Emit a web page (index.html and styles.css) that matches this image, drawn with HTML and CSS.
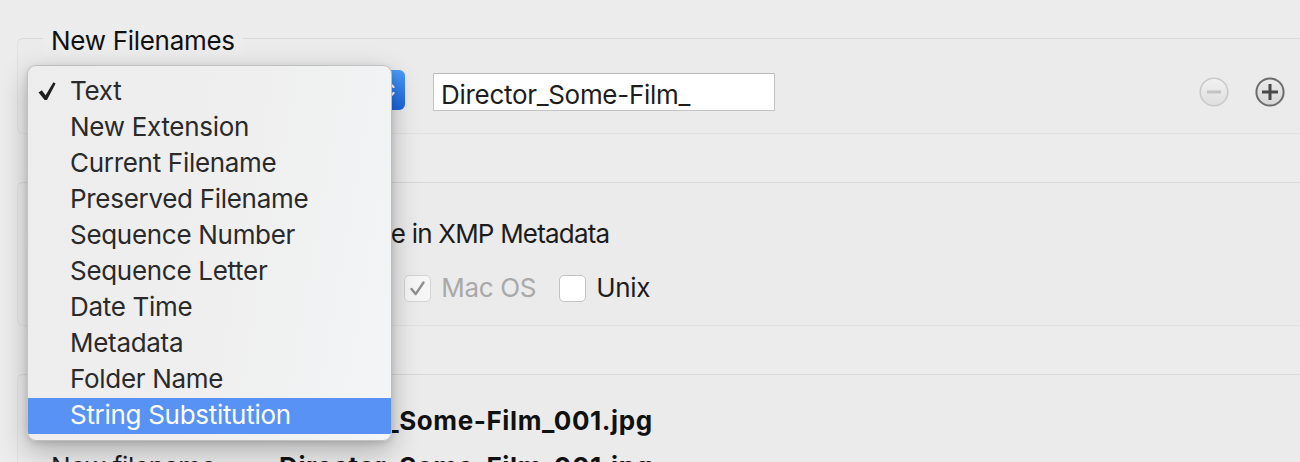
FILE: index.html
```html
<!DOCTYPE html>
<html lang="en">
<head>
<meta charset="utf-8">
<title>Batch Rename</title>
<link rel="stylesheet" href="styles.css">
</head>
<body>
<div class="dialog">
  <section class="group g1">
    <div class="group-title">New Filenames</div>
    <div class="rename-row">
      <div class="popup">
        <span class="popup-label">Text</span>
        <span class="popup-cap">
          <svg viewBox="0 0 32 40" width="32" height="40"><path d="M11.5 17 L16 12.5 L20.5 17 M11.5 23 L16 27.5 L20.5 23" fill="none" stroke="#fff" stroke-width="2.4" stroke-linecap="round" stroke-linejoin="round"/></svg>
        </span>
      </div>
      <div class="textfield">Director_Some-Film_</div>
      <button class="round-btn minus" disabled>
        <svg viewBox="0 0 30 30" width="30" height="30"><defs><linearGradient id="gm" x1="0" y1="0" x2="0" y2="1"><stop offset="0" stop-color="#f2f2f2"/><stop offset="1" stop-color="#dedede"/></linearGradient></defs><circle cx="15" cy="15" r="13.8" fill="url(#gm)" stroke="#c9c9c9" stroke-width="1.6"/><rect x="8" y="13.5" width="14" height="3" fill="#c3c3c3"/></svg>
      </button>
      <button class="round-btn plus">
        <svg viewBox="0 0 30 30" width="30" height="30"><defs><linearGradient id="gp" x1="0" y1="0" x2="0" y2="1"><stop offset="0" stop-color="#ececec"/><stop offset="1" stop-color="#d6d6d6"/></linearGradient></defs><circle cx="15" cy="15" r="13.6" fill="url(#gp)" stroke="#6c6c6c" stroke-width="2"/><rect x="7" y="13.5" width="16" height="3" fill="#484848"/><rect x="13.5" y="7" width="3" height="16" fill="#484848"/></svg>
      </button>
    </div>
  </section>

  <section class="group g2">
    <div class="group-title">Options</div>
    <div class="check-row">
      <span class="checkbox"></span>
      <span class="xmp-label">Preserve current filename in XMP Metadata</span>
    </div>
    <div class="compat-row">
      <span class="compat-label">Compatibility:</span>
      <span class="opt"><span class="checkbox"></span><span>Windows</span></span>
      <span class="opt disabled"><span class="checkbox checked"><svg viewBox="0 0 27 27" width="25" height="25"><path d="M7 14 L11.5 19.5 L20 7" fill="none" stroke="#8e8e8e" stroke-width="2.6" stroke-linecap="round" stroke-linejoin="round"/></svg></span><span>Mac OS</span></span>
      <span class="opt"><span class="checkbox"></span><span>Unix</span></span>
    </div>
  </section>

  <section class="group g3">
    <div class="group-title">Preview</div>
    <div class="preview-grid">
      <span>Current filename:</span><b>Director_Some-Film_001.jpg</b>
      <span>New filename:</span><b>Director_Some-Film_001.jpg</b>
    </div>
  </section>

  <ul class="menu">
    <li class="item"><svg class="check" viewBox="0 0 18 18" width="18" height="18"><path d="M0.6 10.4 L3.8 8.2 L7.6 13.2 L15.4 0.2 L17.6 1.4 L9 17.9 L6.6 17.9 Z" fill="#1e1e1e"/></svg>Text</li>
    <li class="item">New Extension</li>
    <li class="item">Current Filename</li>
    <li class="item">Preserved Filename</li>
    <li class="item">Sequence Number</li>
    <li class="item">Sequence Letter</li>
    <li class="item">Date Time</li>
    <li class="item">Metadata</li>
    <li class="item">Folder Name</li>
    <li class="item active">String Substitution</li>
  </ul>
</div>
</body>
</html>
```

FILE: styles.css
```css
html, body {
  margin: 0;
  height: 462px;
  overflow: hidden;
  background: #ececec;
}

body {
  font-family: Inter, "Noto Sans", sans-serif;
  font-size: 26px;
  letter-spacing: -0.3px;
  color: #1c1c1c;
}

.dialog {
  position: relative;
  box-sizing: border-box;
  height: 462px;
  padding: 38px 0 0 17px;
}

.group {
  margin-right: -40px;
  border: 1px solid #e1e1e1;
  border-top-color: #d9d9d9;
  border-radius: 6px;
  background: #ebebeb;
}

.group + .group {
  margin-top: 48px;
}

.group-title {
  width: fit-content;
  margin: -14px 0 0 25px;
  padding: 0 8px;
  line-height: 32px;
  background: #ececec;
  color: #111;
}

/* group 1 */
.g1 {
  padding-bottom: 22px;
}

.rename-row {
  display: flex;
  align-items: flex-start;
  margin: 13px 0 0 11px;
  padding-right: 54px;
}

.popup {
  display: flex;
  box-sizing: border-box;
  width: 376px;
  height: 40px;
  border: 1px solid #c6c6c6;
  border-radius: 6px;
  background: #fff;
  line-height: 38px;
}

.popup-label {
  padding-left: 12px;
}

.popup-cap {
  display: block;
  width: 32px;
  height: 40px;
  margin: -1px -1px -1px auto;
  border-radius: 0 6px 6px 0;
  background: linear-gradient(#4b9cf8, #1c63df);
}

.popup-cap svg {
  display: block;
}

.textfield {
  box-sizing: border-box;
  width: 342px;
  height: 38px;
  margin: 3px 0 0 28px;
  padding: 5px 7px 0;
  border: 1px solid #c4c4c4;
  border-top-color: #b9b9b9;
  background: #fff;
  line-height: 32px;
  color: #1d1d1d;
}

.round-btn {
  width: 30px;
  height: 30px;
  margin-top: 7px;
  padding: 0;
  border: 0;
  background: none;
}

.round-btn svg {
  display: block;
}

.minus {
  margin-left: auto;
}

.plus {
  margin-left: 26px;
}

/* group 2 */
.g2 {
  padding-bottom: 21px;
}

.check-row {
  display: flex;
  align-items: center;
  gap: 10px;
  margin: 17px 0 0 52px;
  line-height: 32px;
}

.xmp-label {
  letter-spacing: -0.8px;
}

.checkbox {
  display: block;
  flex: none;
  box-sizing: border-box;
  width: 27px;
  height: 27px;
  border: 1px solid #c2c2c2;
  border-radius: 5px;
  background: #fff;
}

.checkbox.checked {
  border-color: #d4d4d4;
  background: #f6f6f6;
}

.checkbox svg {
  display: block;
}

.compat-row {
  display: flex;
  align-items: center;
  margin: 22px 0 0 33px;
  line-height: 32px;
}

.compat-label {
  width: 182px;
}

.opt {
  display: flex;
  align-items: center;
  gap: 10px;
  margin-right: 23px;
}

.opt.disabled {
  color: #a9a9a9;
}

/* group 3 */
.g3 {
  height: 200px;
}

.preview-grid {
  display: grid;
  grid-template-columns: 228px auto;
  row-gap: 14px;
  margin: 12px 0 0 33px;
  line-height: 32px;
}

.preview-grid b {
  font-weight: 700;
  letter-spacing: 0.6px;
  color: #111;
}

/* popup menu */
.menu {
  position: absolute;
  left: 27px;
  top: 65px;
  box-sizing: border-box;
  width: 365px;
  height: 376px;
  margin: 0;
  padding: 8px 0 0;
  list-style: none;
  overflow: hidden;
  border: 1px solid rgba(0, 0, 0, 0.2);
  border-radius: 9px;
  background: linear-gradient(100deg, #ededed 0%, #efefef 55%, #f3f5f6 100%);
  box-shadow: 0 10px 28px rgba(0, 0, 0, 0.26), 0 2px 6px rgba(0, 0, 0, 0.12);
}

.item {
  position: relative;
  height: 36px;
  box-sizing: border-box;
  padding: 0 0 3px 42px;
  line-height: 33px;
  color: #2a2a2a;
  white-space: nowrap;
}

.item.active {
  background: #5892f4;
  color: #fff;
}

.check {
  position: absolute;
  left: 10px;
  top: 8px;
}
```
